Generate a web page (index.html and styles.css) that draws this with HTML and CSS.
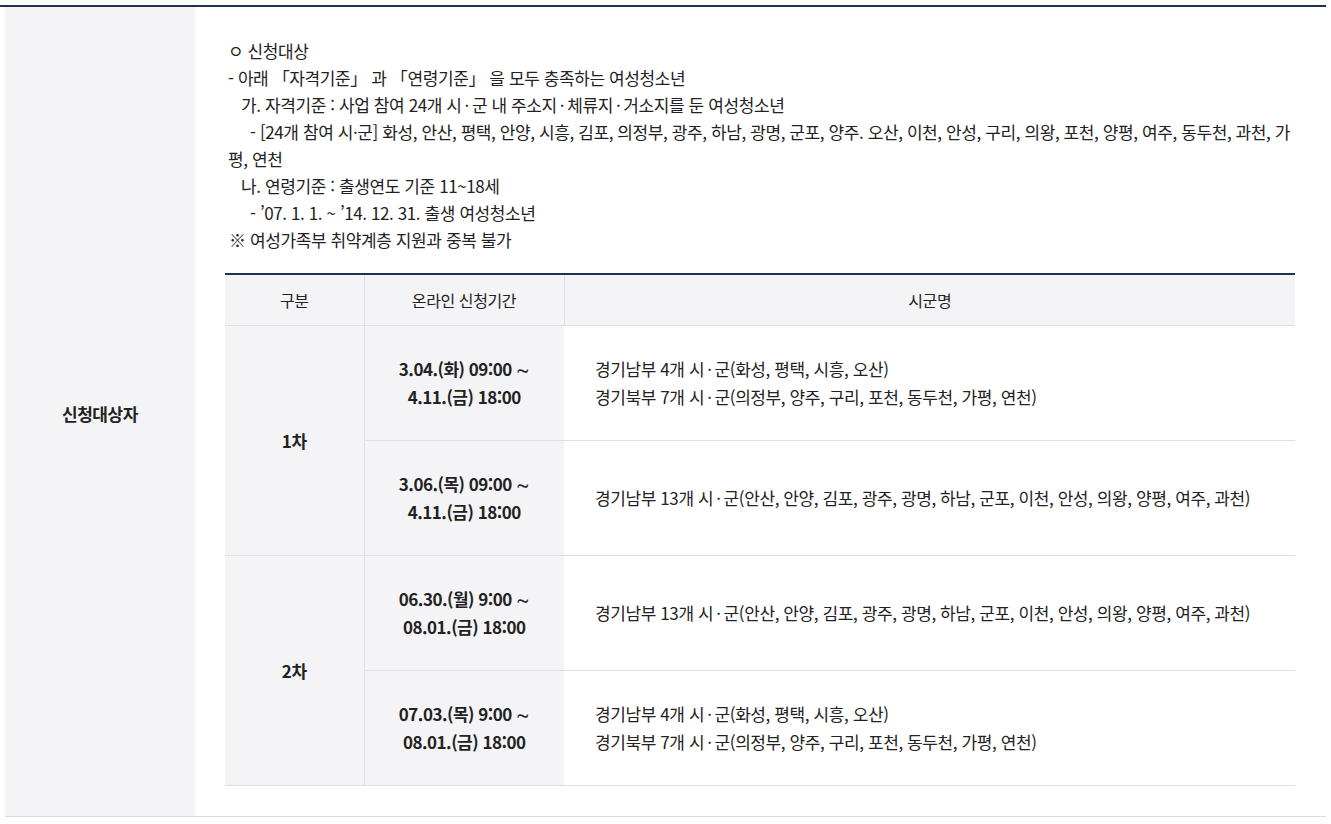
FILE: index.html
```html
<!DOCTYPE html>
<html lang="ko">
<head>
<meta charset="utf-8">
<title>신청대상자</title>
<link rel="stylesheet" href="styles.css">
</head>
<body>
<div class="board">
  <div class="row">
    <div class="th">신청대상자</div>
    <div class="td">
      <div class="desc">
        <p>ㅇ 신청대상</p>
        <p>- 아래 「자격기준」 과 「연령기준」 을 모두 충족하는 여성청소년</p>
        <p class="i1">가. 자격기준 : 사업 참여 24개 시<span class="dot">·</span>군 내 주소지<span class="dot">·</span>체류지<span class="dot">·</span>거소지를 둔 여성청소년</p>
        <p class="i2">- [24개 참여 시·군] 화성, 안산, 평택, 안양, 시흥, 김포, 의정부, 광주, 하남, 광명, 군포, 양주. 오산, 이천, 안성, 구리, 의왕, 포천, 양평, 여주, 동두천, 과천, 가평, 연천</p>
        <p class="i1">나. 연령기준 : 출생연도 기준 11~18세</p>
        <p class="i2">- ’07. 1. 1. ~ ’14. 12. 31. 출생 여성청소년</p>
        <p class="note">※ 여성가족부 취약계층 지원과 중복 불가</p>
      </div>
      <table class="sched">
        <colgroup>
          <col class="c1"><col class="c2"><col class="c3">
        </colgroup>
        <thead>
          <tr><th>구분</th><th>온라인 신청기간</th><th>시군명</th></tr>
        </thead>
        <tbody>
          <tr>
            <td class="grp" rowspan="2">1차</td>
            <td class="date">3.04.(화) 09:00 ∼<br>4.11.(금) 18:00</td>
            <td class="area">경기남부 4개 시<span class="dot">·</span>군(화성, 평택, 시흥, 오산)<br>경기북부 7개 시<span class="dot">·</span>군(의정부, 양주, 구리, 포천, 동두천, 가평, 연천)</td>
          </tr>
          <tr>
            <td class="date">3.06.(목) 09:00 ∼<br>4.11.(금) 18:00</td>
            <td class="area">경기남부 13개 시<span class="dot">·</span>군(안산, 안양, 김포, 광주, 광명, 하남, 군포, 이천, 안성, 의왕, 양평, 여주, 과천)</td>
          </tr>
          <tr>
            <td class="grp" rowspan="2">2차</td>
            <td class="date">06.30.(월) 9:00 ∼<br>08.01.(금) 18:00</td>
            <td class="area">경기남부 13개 시<span class="dot">·</span>군(안산, 안양, 김포, 광주, 광명, 하남, 군포, 이천, 안성, 의왕, 양평, 여주, 과천)</td>
          </tr>
          <tr>
            <td class="date">07.03.(목) 9:00 ∼<br>08.01.(금) 18:00</td>
            <td class="area">경기남부 4개 시<span class="dot">·</span>군(화성, 평택, 시흥, 오산)<br>경기북부 7개 시<span class="dot">·</span>군(의정부, 양주, 구리, 포천, 동두천, 가평, 연천)</td>
          </tr>
        </tbody>
      </table>
    </div>
  </div>
</div>
</body>
</html>
```
FILE: styles.css
```css
* { box-sizing: border-box; }
html, body { margin: 0; padding: 0; background: #fff; }
body {
  font-family: "Noto Sans CJK KR", "Noto Sans", sans-serif;
  color: #222;
  font-size: 17px;
  letter-spacing: -0.4px;
}
.board {
  margin-top: 5px;
  width: 1326px;
  border-top: 2px solid #1d3350;
}
.row {
  display: flex;
  margin-left: 5px;
  border-bottom: 1px solid #dcdcdc;
}
.th {
  width: 190px;
  flex: none;
  background: #f4f4f6;
  display: flex;
  align-items: center;
  justify-content: center;
  font-weight: 700;
  font-size: 17px;
  padding-top: 4px;
}
.td {
  flex: 1;
  padding: 30px 30px 30px 30px;
}
.desc { padding: 0 0 20px 3px; }
.desc p {
  margin: 0;
  line-height: 27px;
}
.desc .i1 { padding-left: 13px; }
.desc .i2 { text-indent: 22px; }
.desc .note { padding-left: 1px; }
.dot { padding: 0 3px; }
.sched {
  width: 1070px;
  border-collapse: collapse;
  border-top: 2px solid #1d3350;
  table-layout: fixed;
}
.sched .c1 { width: 139px; }
.sched .c2 { width: 200px; }
.sched th {
  background: #f4f4f6;
  font-weight: 400;
  height: 51px;
  font-size: 16px;
  border-bottom: 1px solid #e0e0e0;
  border-left: 1px solid #e0e0e0;
  padding: 0;
}
.sched th:first-child { border-left: 0; }
.sched td {
  height: 115px;
  border-bottom: 1px solid #e0e0e0;
  padding: 0;
}
.sched .grp {
  background: #f4f4f6;
  text-align: center;
  font-weight: 700;
  font-size: 17px;
}
.sched .date {
  background: #f4f4f6;
  border-left: 1px solid #e0e0e0;
  text-align: center;
  font-weight: 700;
  font-size: 17px;
  letter-spacing: -0.5px;
  line-height: 28px;
}
.sched .area {
  padding-left: 31px;
  line-height: 28px;
}
```
